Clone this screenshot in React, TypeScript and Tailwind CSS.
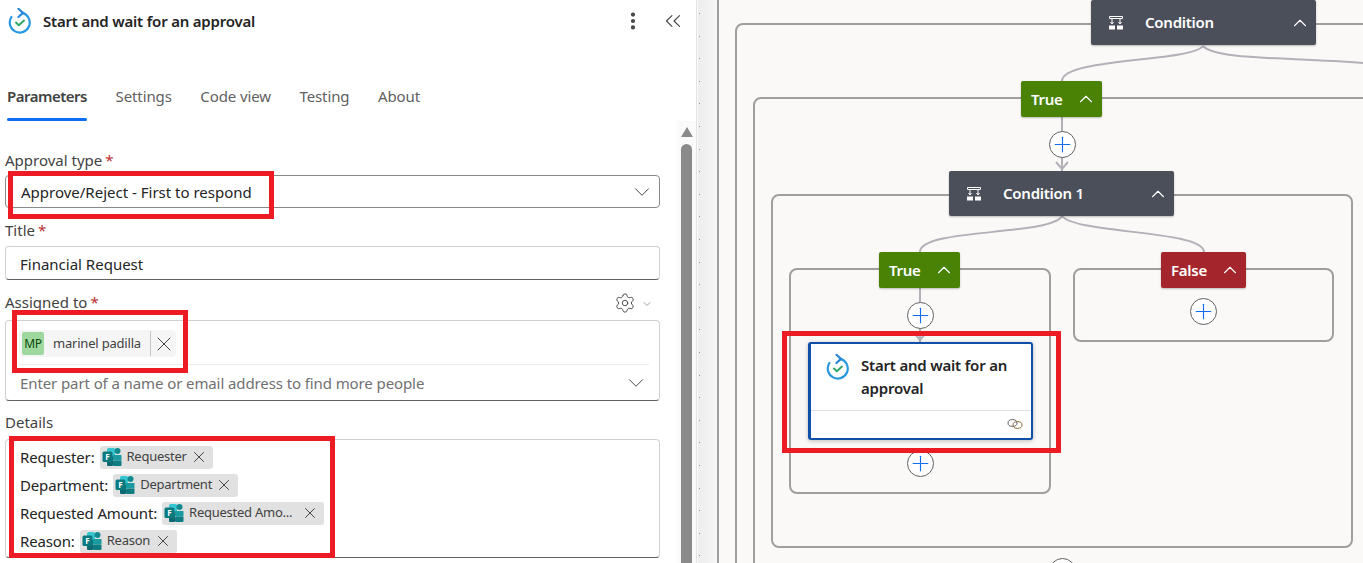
import { ChevronDown, ChevronUp, ChevronsLeft, EllipsisVertical, Plus, Settings, X } from "lucide-react";

const font = "font-['Noto_Sans','Open_Sans',sans-serif]";

function ApprovalIcon() {
  return (
    <svg width="24" height="26" viewBox="0 0 24 26" fill="none">
      <path d="M14.5 4.9A10 10 0 1 1 3.4 9" stroke="#2899e0" strokeWidth="2.2" strokeLinecap="round" />
      <path d="M10.4 0.8 15 4.9 10.4 9" stroke="#2b88d8" strokeWidth="2.2" strokeLinecap="round" strokeLinejoin="round" />
      <path d="M8 14.6 10.8 17.2 16 12.6" stroke="#2fa866" strokeWidth="2" strokeLinecap="round" strokeLinejoin="round" />
    </svg>
  );
}

function FormsIcon() {
  return (
    <svg width="20" height="20" viewBox="0 0 20 20" className="shrink-0">
      <rect x="5" y="1" width="8" height="8" rx="1.5" fill="#37c6d0" />
      <circle cx="15.5" cy="4" r="3" fill="#0f8a90" />
      <rect x="11" y="8" width="8.5" height="5.5" fill="#1a9ba1" />
      <rect x="11" y="13.5" width="8.5" height="5.5" rx="1" fill="#0f7c82" />
      <rect x="5" y="9" width="6" height="10" rx="1" fill="#0c6a70" />
      <rect x="0.5" y="4.5" width="10" height="10.5" rx="1.5" fill="#0b7a80" />
      <text x="3.2" y="12.8" fontSize="8" fontWeight="700" fill="#ffffff">F</text>
    </svg>
  );
}

function ConditionIcon() {
  return (
    <svg width="16" height="16" viewBox="0 0 16 16" fill="none" stroke="#ffffff" strokeWidth="1">
      <path d="M1.5 1.5h13M1.5 3.5h13M1.5 1.5v2M14.5 1.5v2M4 3.5v5M12 3.5v5" />
      <path d="M2.5 7 4 9 5.5 7M10.5 7 12 9 13.5 7" />
      <rect x="1.5" y="11" width="5" height="3" fill="#ffffff" />
      <rect x="9.5" y="11" width="5" height="3" fill="#ffffff" />
    </svg>
  );
}

function LinkIcon() {
  return (
    <svg width="16" height="12" viewBox="0 0 16 12" fill="none" stroke="#616161" strokeWidth="1">
      <ellipse cx="5.5" cy="5" rx="4.5" ry="3.4" />
      <ellipse cx="10.5" cy="7" rx="4.5" ry="3.4" stroke="#8a6a3a" />
    </svg>
  );
}

function Label({ text, required }: { text: string; required?: boolean }) {
  return (
    <div className="h-[20px] text-[15px] leading-[18px] text-[#424242]">
      {text}
      {required && <span className="ml-[3px] text-[#bc2f32]">*</span>}
    </div>
  );
}

function TokenRow({ label, token, width }: { label: string; token: string; width: number }) {
  return (
    <div className="flex h-[28px] items-center gap-[5px]">
      <span className="text-[15px] tracking-[-0.15px] text-[#242424]">{label}</span>
      <span
        className="flex h-[23px] items-center rounded-[3px] bg-[#e1e1e1] pl-[2px] pr-[5px]"
        style={{ width }}
      >
        <FormsIcon />
        <span className="ml-[5px] flex-1 truncate text-[13px] tracking-[-0.25px] text-[#424242]">{token}</span>
        <X size={18} strokeWidth={1.3} className="text-[#424242]" />
      </span>
    </div>
  );
}

function Panel() {
  const tabs = ["Settings", "Code view", "Testing", "About"];
  return (
    <aside className="flex h-full w-[696px] shrink-0 flex-col bg-white">
      <header className="flex h-[42px] items-center pl-[8px]">
        <ApprovalIcon />
        <span className="ml-[11px] text-[15px] font-semibold tracking-[-0.2px] text-[#242424]">
          Start and wait for an approval
        </span>
        <EllipsisVertical size={22} strokeWidth={2.6} className="ml-auto text-[#424242]" />
        <ChevronsLeft size={26} strokeWidth={1} className="ml-[16px] mr-[10px] text-[#424242]" />
      </header>

      <nav className="mt-[40px] flex h-[39px] items-start gap-[28.5px] pl-[7px] pt-[3px] text-[15px] tracking-[-0.1px] text-[#616161]">
        <span className="relative h-[36px] w-[80px] whitespace-nowrap font-semibold tracking-[-0.5px] text-[#424242]">
          Parameters
          <span className="absolute bottom-0 left-0 h-[3px] w-[80px] rounded-full bg-[#0f6cf5]" />
        </span>
        {tabs.map((t) => (
          <span key={t}>{t}</span>
        ))}
      </nav>

      <div className="flex min-h-0 flex-1">
        <div className="w-[660px] pl-[5px] pt-[30px]">
          <Label text="Approval type" required />
          <div className="mt-[4px] flex h-[33px] items-center justify-between rounded-[4px] border border-[#8a8a8a] pl-[15px] pr-[4px] text-[15px] text-[#242424]">
            <span className="pt-[1px]">Approve/Reject - First to respond</span>
            <ChevronDown size={26} strokeWidth={0.9} className="text-[#424242]" />
          </div>

          <div className="mt-[13px]">
            <Label text="Title" required />
          </div>
          <div className="mt-[5px] flex h-[34px] items-center rounded-[4px] border border-[#d1d1d1] border-b-[#616161] pl-[14px] pt-[2px] text-[15px] text-[#242424]">
            Financial Request
          </div>

          <div className="mt-[12px] flex items-center justify-between">
            <Label text="Assigned to" required />
            <div className="mr-[7px] flex items-center gap-[5px] text-[#424242]">
              <Settings size={22} strokeWidth={1} />
              <ChevronDown size={12} strokeWidth={1} className="mt-[2px]" />
            </div>
          </div>
          <div className="mt-[6px] h-[81px] rounded-[4px] border border-[#d1d1d1] border-b-[#616161] pl-[13px] pr-[10px]">
            <div className="flex h-[44px] items-start border-b border-[#ebebeb] pt-[9px]">
              <div className="flex h-[27px] w-[157px] items-center rounded-[4px] bg-[#f5f5f5] pl-[3px]">
                <span className="flex h-[23px] w-[22px] items-center justify-center rounded-[2px] bg-[#9fd89f] text-[12px] tracking-[-0.3px] text-[#0e4a0e]">
                  MP
                </span>
                <span className="ml-[9px] w-[97px] whitespace-nowrap text-[13px] tracking-[-0.2px] text-[#424242]">marinel padilla</span>
                <span className="h-[25px] w-px bg-[#c7c7c7]" />
                <X size={24} strokeWidth={1} className="ml-px text-[#424242]" />
              </div>
            </div>
            <div className="flex h-[35px] items-center justify-between pt-[1px] text-[15px] tracking-[-0.1px] text-[#707070]">
              <span className="pl-px">Enter part of a name or email address to find more people</span>
              <ChevronDown size={26} strokeWidth={0.9} className="text-[#424242]" />
            </div>
          </div>

          <div className="mt-[12px]">
            <Label text="Details" />
          </div>
          <div className="mt-[6px] h-[119px] rounded-[4px] border border-[#d1d1d1] border-b-[#616161] px-[14px] pt-[3px]">
            <TokenRow label="Requester:" token="Requester" width={113} />
            <TokenRow label="Department:" token="Department" width={125} />
            <TokenRow label="Requested Amount:" token="Requested Amo..." width={162} />
            <TokenRow label="Reason:" token="Reason" width={97} />
          </div>
        </div>

        <div className="ml-[17px] flex w-[19px] flex-col items-center bg-[#fafafa] pt-[6px]">
          <span className="h-0 w-0 border-x-[6px] border-b-[10px] border-x-transparent border-b-[#8a8a8a]" />
          <span className="mt-[7px] w-[11px] flex-1 rounded-t-[6px] bg-[#8a8a8a]" />
        </div>
      </div>
    </aside>
  );
}

function Head({ left, top, width, height, color, children }: { left: number; top: number; width: number; height: number; color: string; children: React.ReactNode }) {
  return (
    <div
      className="absolute flex items-center rounded-[2px] text-[15px] font-semibold tracking-[-0.25px] text-white shadow-[0_1px_2px_rgba(0,0,0,0.25)]"
      style={{ left, top, width, height, background: color }}
    >
      {children}
    </div>
  );
}

function ConditionNode({ left, top, title }: { left: number; top: number; title: string }) {
  return (
    <Head left={left} top={top} width={225} height={45} color="#4a4f59">
      <span className="ml-[17px]">
        <ConditionIcon />
      </span>
      <span className="ml-[21px]">{title}</span>
      <ChevronUp size={22} strokeWidth={1.2} className="ml-auto mr-[5px]" />
    </Head>
  );
}

function BranchNode({ left, top, width, title, color }: { left: number; top: number; width: number; title: string; color: string }) {
  return (
    <Head left={left} top={top} width={width} height={36} color={color}>
      <span className="ml-[10px]">{title}</span>
      <ChevronUp size={22} strokeWidth={1.2} className="ml-auto mr-[5px]" />
    </Head>
  );
}

function AddButton({ x, y }: { x: number; y: number }) {
  return (
    <span
      className="absolute flex h-[27px] w-[27px] items-center justify-center rounded-full border border-[#616161] bg-white text-[#0f6cf5]"
      style={{ left: x - 13.5, top: y - 13.5 }}
    >
      <Plus size={27} strokeWidth={1.1} />
    </span>
  );
}

function Scope({ left, top, width, height }: { left: number; top: number; width: number; height: number }) {
  return (
    <div
      className="absolute rounded-[8px] border-2 border-[#a19f9d]"
      style={{ left, top, width, height }}
    />
  );
}

function RedBox({ left, top, width, height }: { left: number; top: number; width: number; height: number }) {
  return (
    <div
      className="absolute z-20 border-[5px] border-[#ed1c24]"
      style={{ left, top, width, height }}
    />
  );
}

function Canvas() {
  const dots = Array.from({ length: 25 }, (_, i) => 13 + i * 22.6);
  return (
    <main className="relative h-full flex-1 overflow-hidden border-l border-[#e4e4e4] bg-[#faf9f8]">
      <div className="absolute inset-y-0 left-[1px] w-[20px] bg-gradient-to-r from-[#ededed] to-[#f7f7f7]" />
      {dots.map((y) => (
        <span key={y} className="absolute left-[2px] h-[1px] w-[1px] bg-[#8a8a8a]" style={{ top: y }} />
      ))}

      {/* canvas coordinates are offset by the 697px panel */}
      <Scope left={20} top={-20} width={1000} height={700} />
      <Scope left={38} top={23} width={900} height={700} />
      <Scope left={56} top={97} width={860} height={600} />
      <Scope left={74} top={194} width={582} height={354} />
      <Scope left={92} top={268} width={262} height={226} />
      <Scope left={376} top={268} width={261} height={74} />

      <svg className="absolute inset-0" width="667" height="563" fill="none" stroke="#b3b0b8" strokeWidth="2">
        <path d="M506 46C494 62 365 58 365 81" />
        <path d="M506 46C519 60 589 57 667 63" />
        <path d="M365 117V171" />
        <path d="M359 162 365 169 371 162" />
        <path d="M365 216C354 236 223 228 223 252" />
        <path d="M365 216C379 234 507 230 507 252" />
        <path d="M223 288V342" />
        <path d="M217 333 223 340 229 333" />
      </svg>

      <ConditionNode left={394} top={0} title="Condition" />
      <BranchNode left={324} top={81} width={81} title="True" color="#498205" />
      <AddButton x={365} y={144} />
      <ConditionNode left={252} top={171} title="Condition 1" />
      <BranchNode left={182} top={252} width={81} title="True" color="#498205" />
      <BranchNode left={464} top={252} width={85} title="False" color="#a4262c" />
      <AddButton x={223} y={315} />
      <AddButton x={506} y={311} />

      <div className="absolute left-[111px] top-[342px] h-[98px] w-[225px] rounded-[3px] border-2 border-l-[3px] border-[#0f4fa8] bg-white shadow-[0_1px_4px_rgba(0,0,0,0.25)]">
        <div className="flex h-[67px] border-b border-[#e0e0e0] pl-[15px] pt-[10px]">
          <ApprovalIcon />
          <span className="ml-[11px] w-[165px] text-[15px] font-semibold leading-[23px] tracking-[-0.2px] text-[#242424]">
            Start and wait for an approval
          </span>
        </div>
        <div className="flex justify-end pr-[8px] pt-[7px]">
          <LinkIcon />
        </div>
      </div>

      <AddButton x={223} y={463} />
      <AddButton x={365} y={571} />
    </main>
  );
}

export default function App() {
  return (
    <div className={`relative flex h-[563px] w-[1363px] overflow-hidden bg-white ${font}`}>
      <Panel />
      <Canvas />
      <RedBox left={8} top={171} width={266} height={48} />
      <RedBox left={12} top={310} width={176} height={63} />
      <RedBox left={9} top={436} width={326} height={122} />
      <RedBox left={782} top={331} width={279} height={122} />
    </div>
  );
}
